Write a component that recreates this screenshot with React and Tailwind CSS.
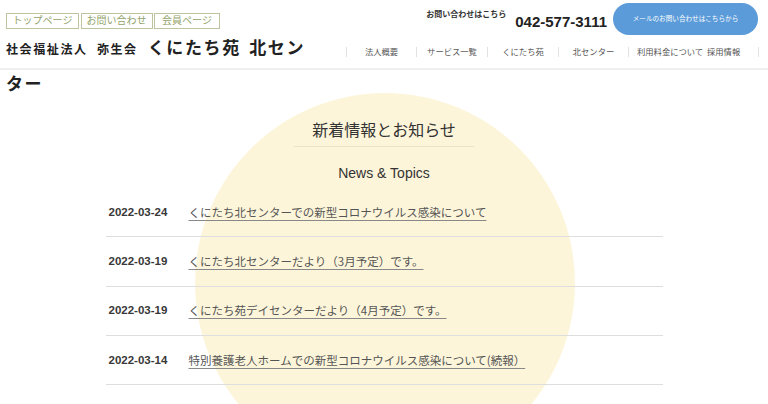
import React from 'react'

const topLinks = [
  { label: 'トップページ', w: 'w-[73px]' },
  { label: 'お問い合わせ', w: 'w-[72px]' },
  { label: '会員ページ', w: 'w-[66px]' },
]

const news = [
  { date: '2022-03-24', title: 'くにたち北センターでの新型コロナウイルス感染について' },
  { date: '2022-03-19', title: 'くにたち北センターだより（3月予定）です。' },
  { date: '2022-03-19', title: 'くにたち苑デイセンターだより（4月予定）です。' },
  { date: '2022-03-14', title: '特別養護老人ホームでの新型コロナウイルス感染について(続報）' },
]

function Sep() {
  return <span className="block w-px h-[10px] bg-[#e2e2e2] shrink-0" />
}

function GlobalNav() {
  return (
    <nav className="flex items-center h-[20px] text-[8.3px] text-[#555] leading-none">
      <Sep />
      <a className="w-[69px] text-center">法人概要</a>
      <Sep />
      <a className="w-[70px] text-center">サービス一覧</a>
      <Sep />
      <a className="w-[70px] text-center">くにたち苑</a>
      <Sep />
      <a className="w-[69px] text-center">北センター</a>
      <Sep />
      <a className="w-[78px] pl-[8px] whitespace-nowrap">利用料金について</a>
      <a className="w-[51px] whitespace-nowrap">採用情報</a>
      <Sep />
    </nav>
  )
}

export default function App() {
  return (
    <div className="w-[768px] h-[404px] overflow-hidden bg-white font-['Liberation_Sans','Noto_Sans_CJK_JP',sans-serif] text-[#333]">
      <header className="h-[70px] border-b-2 border-[#efefef] flex justify-between relative z-10">
        <div className="pl-[6px] pt-[13px]">
          <ul className="flex gap-[1.5px]">
            {topLinks.map((l) => (
              <li
                key={l.label}
                className={`${l.w} h-[16px] border border-[#bcc59f] text-[#93a46b] text-[10px] leading-[14px] text-center`}
              >
                {l.label}
              </li>
            ))}
          </ul>
          {/* site name wraps onto a second line below the header rule */}
          <h1 className="w-[312px] mt-[1px] font-bold leading-[34px] tracking-[0.1em] font-['Noto_Sans_CJK_JP',sans-serif] text-[#222]">
            <span className="text-[12px] [word-spacing:5px]">社会福祉法人 弥生会</span>
            <span className="text-[17px] ml-[10px] [word-spacing:3px]">くにたち苑 北センター</span>
          </h1>
        </div>

        <div className="pt-[3px] pr-[10px] flex flex-col items-end">
          <div className="flex items-center">
            <span className="text-[8px] font-bold mt-[-8px]">お問い合わせはこちら</span>
            <span className="ml-[9px] text-[15px] font-bold text-[#222] mt-[7px]">042-577-3111</span>
            <a className="ml-[6px] w-[145px] h-[32px] rounded-full bg-[#5b9bd9] text-white text-[6.6px] flex items-center justify-center">
              メールのお問い合わせはこちらから
            </a>
          </div>
          <div className="mt-[7px] mr-[-1px]">
            <GlobalNav />
          </div>
        </div>
      </header>

      <main className="relative">
        <div className="absolute left-[195px] top-[23px] w-[380px] h-[380px] rounded-full bg-[#fdf5da]" />

        <section className="relative flex flex-col items-center pt-[47px]">
          <h2 className="w-[180px] text-center text-[16px] leading-[24px] pb-[5px] border-b border-[#ebe3c6] font-['Noto_Sans_CJK_JP',sans-serif] text-[#333]">
            新着情報とお知らせ
          </h2>
          <p className="mt-[16px] text-[14px] leading-[20px] text-[#333]">News &amp; Topics</p>

          <ul className="mt-[5px] w-[557px]">
            {news.map((n, i) => (
              <li key={i} className="h-[49.33px] border-b border-[#dedede] flex items-center">
                <span className="w-[83px] pl-[3px] text-[11.5px] font-bold text-[#383838]">{n.date}</span>
                <a className="text-[11.5px] text-[#555] underline underline-offset-[3px] decoration-[#888] font-['Noto_Sans_CJK_JP',sans-serif]">
                  {n.title}
                </a>
              </li>
            ))}
          </ul>
        </section>
      </main>
    </div>
  )
}
